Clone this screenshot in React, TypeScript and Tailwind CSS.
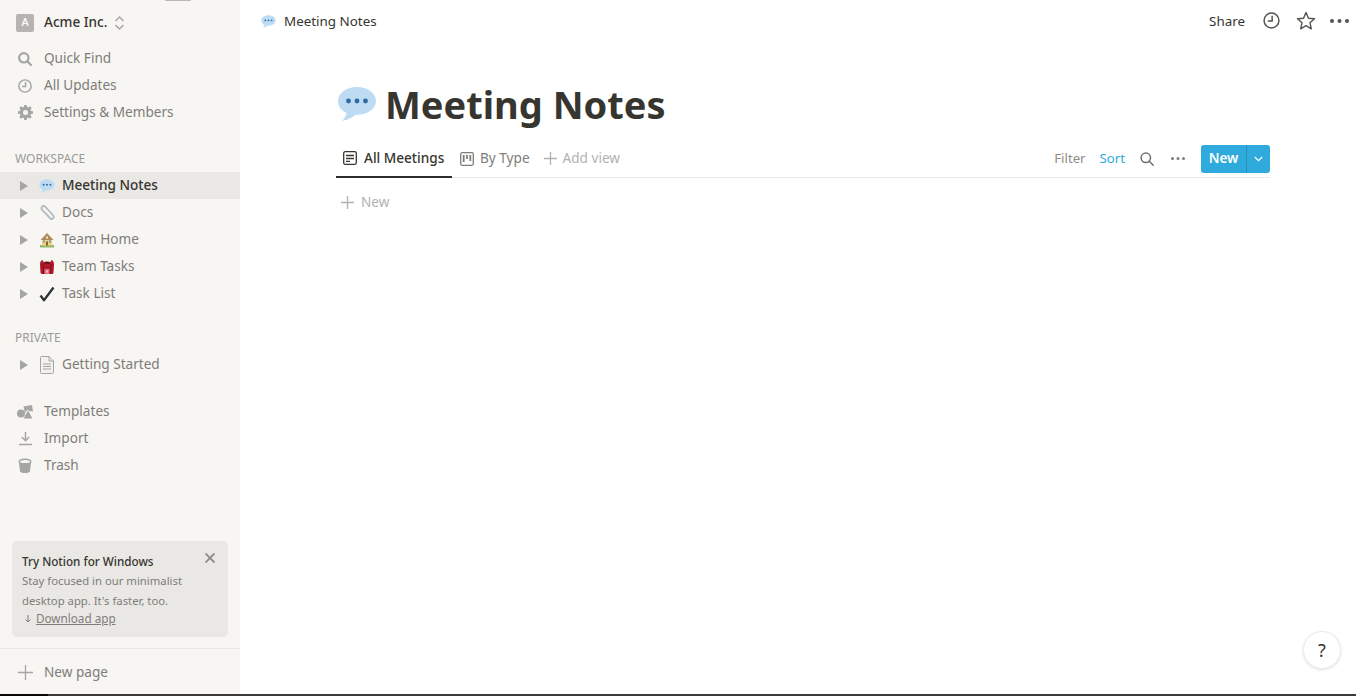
import React from "react";

const Bubble = ({ s }: { s: number }) => (
  <svg width={s} height={s} viewBox="0 0 40 40" className="shrink-0">
    <path d="M20 3C9.5 3 1 9.200 1 17c0 5.600 3.400 9.600 8.600 12-.6 3-2.400 5.800-4.600 8 5-.8 10.600-3.400 13.600-6.200H20c10.500 0 19-6 19-13.800S30.500 3 20 3z" fill="#bddcf4" />
    <circle cx="11.500" cy="17" r="2.400" fill="#2f6a9f" />
    <circle cx="20" cy="17" r="2.400" fill="#2f6a9f" />
    <circle cx="28.500" cy="17" r="2.400" fill="#2f6a9f" />
  </svg>
);

const Clip = () => (
  <svg width="16" height="16" viewBox="0 0 16 16" fill="none" stroke="#b4bac0" strokeWidth="1.800" strokeLinecap="round">
    <path d="M2.500 4l8.200 9c1 1 2.600 1.200 3.400.4s.7-2.300-.3-3.400L6.500 2C5.600 1 4 .8 3 1.600s-.7 2.300.2 3.200l7 7.400" />
  </svg>
);

const HomeEmoji = () => (
  <svg width="16" height="16" viewBox="0 0 16 16">
    <rect x="1" y="13" width="14" height="2.500" fill="#8fb96a" />
    <rect x="3" y="7" width="10" height="6.500" fill="#f3d27c" />
    <path d="M8 1L1.500 8h13z" fill="#b08a5a" />
    <rect x="7" y="9.500" width="2" height="4" fill="#8a5a34" />
    <rect x="4" y="8.500" width="2" height="2" fill="#5f9bd0" />
    <rect x="10" y="8.500" width="2" height="2" fill="#5f9bd0" />
    <rect x="7" y="4.500" width="2" height="2" fill="#f4ead0" />
  </svg>
);

const Bag = () => (
  <svg width="16" height="16" viewBox="0 0 16 16">
    <path d="M1 5.500C1 3 2 1.500 3.500 1L5 3.500h6L12.500 1C14 1.500 15 3 15 5.500l-.5 8c-.1 1-.8 1.500-1.800 1.500H3.300c-1 0-1.700-.5-1.800-1.500z" fill="#b0182a" />
    <path d="M5 3.500c.5-1.300 5.500-1.300 6 0L10.500 5h-5z" fill="#701019" />
    <path d="M4 5l.5 10M12 5l-.5 10" stroke="#7c101e" strokeWidth="1" />
    <rect x="5.500" y="10" width="5" height="5" fill="#e06a7c" />
    <rect x="7.400" y="11.500" width="1.200" height="2" fill="#fff" />
  </svg>
);

const Check = () => (
  <svg width="16" height="16" viewBox="0 0 16 16" fill="none">
    <path d="M1.500 9.500l3.500 4.700L14.500 1.500" stroke="#2f3437" strokeWidth="2.300" strokeLinejoin="round" />
  </svg>
);

const Doc = () => (
  <svg width="14" height="18" viewBox="0 0 14 18" fill="none" stroke="#a5a5a3" strokeWidth="1">
    <path d="M.500 1.500a1 1 0 011-1H9L13.500 5v11.500a1 1 0 01-1 1h-11a1 1 0 01-1-1z" fill="#f2f1ee" />
    <path d="M9 .5V5h4.500M3 8h8M3 10.500h8M3 13h8" />
  </svg>
);

const Search = ({ c = "#a5a5a3", w = 2.200 }: { c?: string; w?: number }) => (
  <svg width="14" height="14" viewBox="0 0 14 14" fill="none" stroke={c} strokeWidth={w}>
    <circle cx="5.800" cy="5.800" r="4.700" />
    <path d="M9.200 9.200L13.300 13.300" strokeLinecap="round" />
  </svg>
);

const Clock = ({ s, c, w }: { s: number; c: string; w: number }) => (
  <svg width={s} height={s} viewBox="0 0 16 16" fill="none" stroke={c} strokeWidth={w}>
    <circle cx="8" cy="8" r="7" />
    <path d="M8.600 3.500v5H4.500" />
  </svg>
);

const Gear = () => (
  <svg width="15" height="15" viewBox="0 0 16 16" fill="#a5a5a3">
    <path fillRule="evenodd" d="M6.700 0h2.600l.4 2.200 1.200.5L12.800 1.400l1.800 1.800-1.300 1.900.5 1.200 2.200.4v2.600l-2.200.4-.5 1.200 1.300 1.900-1.800 1.800-1.900-1.300-1.200.5-.4 2.200H6.700l-.4-2.200-1.200-.5-1.900 1.300-1.800-1.800 1.300-1.900-.5-1.200L0 9.300V6.700l2.200-.4.500-1.200L1.400 3.200l1.800-1.800 1.900 1.300 1.200-.5zM8 5.300a2.700 2.700 0 100 5.400 2.700 2.700 0 000-5.400z" />
  </svg>
);

const Shapes = () => (
  <svg width="16" height="14" viewBox="0 0 16 14" fill="#a5a5a3">
    <circle cx="4" cy="8.500" r="4" />
    <path d="M6.500 1.500L15 0l1 6.500-4-.5-1.500-1.500L8 8z" />
    <path d="M11 5.500L15.500 13.500H6.500z" />
  </svg>
);

const Download = () => (
  <svg width="15" height="15" viewBox="0 0 15 15" fill="none" stroke="#a5a5a3" strokeWidth="1.500">
    <path d="M7.500 1v8.500M3.800 6l3.700 3.700L11.200 6M1 13.500h13" />
  </svg>
);

const Trash = () => (
  <svg width="14" height="15" viewBox="0 0 14 15" fill="#a5a5a3">
    <path d="M.500 3.500C.500 1.500 3.500.500 7 .500s6.500 1 6.500 3c0 .6-.2 1-.5 1.300l-1 8.400c-.2 1-2.200 1.800-5 1.800s-4.800-.8-5-1.800L1 4.800c-.3-.3-.5-.7-.5-1.300z" />
    <ellipse cx="7" cy="3.400" rx="5" ry="1.500" fill="#f7f6f3" />
  </svg>
);

const Plus = ({ s, c }: { s: number; c: string }) => (
  <svg width={s} height={s} viewBox="0 0 14 14" fill="none" stroke={c} strokeWidth={14 * 1.300 / s}>
    <path d="M7 0v14M0 7h14" />
  </svg>
);

const Caret = () => (
  <svg width="8" height="10" viewBox="0 0 8 10" className="shrink-0">
    <path d="M0 0l8 5-8 5z" fill="#a5a5a3" />
  </svg>
);

const Dots = ({ c, r, gap, w }: { c: string; r: number; gap: number; w: number }) => (
  <svg width={w} height={r * 2} viewBox={`0 0 ${w} ${r * 2}`}>
    <circle cx={r} cy={r} r={r} fill={c} />
    <circle cx={r + gap} cy={r} r={r} fill={c} />
    <circle cx={r + gap * 2} cy={r} r={r} fill={c} />
  </svg>
);

const NavRow = ({ icon, label }: { icon: React.ReactNode; label: string }) => (
  <div className="flex h-[27px] items-center text-[13.6px] text-[#7e7d79]">
    <div className="flex w-[44px] shrink-0 justify-center pl-[6px]">{icon}</div>
    <span>{label}</span>
  </div>
);

const TreeRow = ({ icon, label, active }: { icon: React.ReactNode; label: string; active?: boolean }) => (
  <div className={`flex h-[27px] items-center pl-[20px] text-[13.6px] ${active ? "bg-[#e9e8e5] text-[#37352f] font-medium" : "text-[#7e7d79]"}`}>
    <Caret />
    <div className="flex w-[34px] shrink-0 justify-center pl-[4px]">{icon}</div>
    <span>{label}</span>
  </div>
);

const SectionLabel = ({ children, cls }: { children: React.ReactNode; cls: string }) => (
  <div className={`flex h-[20px] items-center pl-[15px] text-[12px] text-[#9b9a97] ${cls}`}>{children}</div>
);

export default function App() {
  return (
    <div className="flex h-[696px] w-[1356px] flex-col overflow-hidden bg-white font-['Noto_Sans','Open_Sans',sans-serif] text-[#37352f]">
      <div className="flex min-h-0 flex-1">
        <aside className="relative flex w-[240px] shrink-0 flex-col bg-[#f7f6f3]">
          <div className="absolute left-[165px] top-0 h-[1px] w-[26px] rounded-b bg-[#b8b8b6]" />
          <div className="mt-[9px] flex h-[27px] items-center pl-[16px] text-[13.6px] font-medium text-[#37352f]">
            <div className="flex h-[18px] w-[18px] items-center justify-center rounded-[2px] bg-[#b5b4b2] text-[11px] text-white">A</div>
            <span className="ml-[10px]">Acme Inc.</span>
            <svg width="11" height="14" viewBox="0 0 11 14" fill="none" stroke="#a5a5a3" strokeWidth="1.400" className="ml-[6px]">
              <path d="M1.500 5l4-4 4 4M1.500 9l4 4 4-4" />
            </svg>
          </div>
          <div className="mt-[9px]">
            <NavRow icon={<Search />} label="Quick Find" />
            <NavRow icon={<Clock s={14} c="#a5a5a3" w={1.700} />} label="All Updates" />
            <NavRow icon={<Gear />} label="Settings & Members" />
          </div>
          <SectionLabel cls="mt-[23px] mb-[3px]">WORKSPACE</SectionLabel>
          <TreeRow active icon={<Bubble s={16} />} label="Meeting Notes" />
          <TreeRow icon={<Clip />} label="Docs" />
          <TreeRow icon={<HomeEmoji />} label="Team Home" />
          <TreeRow icon={<Bag />} label="Team Tasks" />
          <TreeRow icon={<Check />} label="Task List" />
          <SectionLabel cls="mt-[21px] mb-[3px]">PRIVATE</SectionLabel>
          <TreeRow icon={<Doc />} label="Getting Started" />
          <div className="mt-[20px]">
            <NavRow icon={<Shapes />} label="Templates" />
            <NavRow icon={<Download />} label="Import" />
            <NavRow icon={<Trash />} label="Trash" />
          </div>
          <div className="relative mx-[12px] mb-[11px] mt-auto h-[96px] rounded-[5px] bg-[#e9e8e5] px-[10px] pt-[11px] text-[11.3px] leading-[19px] text-[#7e7d79]">
            <div className="text-[11.7px] font-medium leading-[18px] text-[#37352f]">Try Notion for Windows</div>
            <div className="mb-[1px] mt-[1px]">Stay focused in our minimalist</div>
            <div>desktop app. It's faster, too.</div>
            <div className="-mt-[1px] flex items-center">
              <svg width="6" height="8" viewBox="0 0 6 8" fill="none" stroke="#7e7d79" strokeWidth="1" className="ml-[3px] mr-[5px]">
                <path d="M3 0v7M.5 4.500L3 7l2.500-2.500" />
              </svg>
              <span className="text-[11.7px] underline">Download app</span>
            </div>
            <svg width="10" height="10" viewBox="0 0 10 10" stroke="#8d8c88" strokeWidth="1.900" className="absolute right-[13px] top-[12px]">
              <path d="M.5.5l9 9M9.500.5l-9 9" />
            </svg>
          </div>
          <div className="flex h-[46px] items-center border-t border-[#e9e8e5] pt-[1px] text-[13.6px] text-[#7e7d79]">
            <div className="flex w-[44px] justify-center pl-[6px]"><Plus s={15} c="#a5a5a3" /></div>
            <span>New page</span>
          </div>
        </aside>

        <main className="relative min-w-0 flex-1">
          <header className="flex h-[42px] items-center pl-[21px] pr-[7px] text-[13.4px]">
            <Bubble s={15} />
            <span className="ml-[8px]">Meeting Notes</span>
            <div className="ml-auto flex items-center">
              <span>Share</span>
              <div className="ml-[18px]"><Clock s={17} c="#55534e" w={1.400} /></div>
              <svg width="20" height="19" viewBox="0 0 20 19" fill="none" stroke="#55534e" strokeWidth="1.400" className="ml-[16px]">
                <path d="M10 1.500l2.500 5.700 6 .6-4.500 4 1.300 6L10 14.700l-5.300 3.100 1.300-6-4.500-4 6-.6z" strokeLinejoin="round" />
              </svg>
              <div className="ml-[14px]"><Dots c="#55534e" r={2} gap={7.500} w={19} /></div>
            </div>
          </header>

          <div className="mx-[96px] w-[934px]">
            <div className="mt-[35px] flex h-[54px] items-center">
              <div className="ml-[1px]"><Bubble s={40} /></div>
              <h1 className="ml-[8px] text-[38px] font-bold leading-none text-[#37352f]">Meeting Notes</h1>
            </div>
            <div className="mt-[9px] flex h-[38px] items-stretch border-b border-[#e9e9e7] text-[13.6px]">
              <div className="-mb-px flex w-[116px] items-center border-b-2 border-[#2f2e2b] pl-[7px] font-medium">
                <svg width="14" height="14" viewBox="0 0 14 14" fill="none" stroke="#37352f" strokeWidth="1.300">
                  <rect x=".7" y=".7" width="12.600" height="12.600" rx="1.500" />
                  <path d="M3 4.500h8M3 7.500h8M3 10.300h4" />
                </svg>
                <span className="ml-[7px]">All Meetings</span>
              </div>
              <div className="ml-[8px] flex items-center text-[#7e7d79]">
                <svg width="14" height="14" viewBox="0 0 14 14" fill="none" stroke="#7e7d79" strokeWidth="1.300">
                  <rect x=".7" y=".7" width="12.600" height="12.600" rx="1.500" />
                  <path d="M3.700 3v7M7 3v4M10.300 3v6" strokeWidth="1.800" />
                </svg>
                <span className="ml-[6px]">By Type</span>
              </div>
              <div className="ml-[14px] flex items-center text-[#b3b2af]">
                <Plus s={13} c="#b3b2af" />
                <span className="ml-[6px]">Add view</span>
              </div>
              <div className="ml-auto flex items-center text-[13.2px]">
                <span className="text-[#8d8c88]">Filter</span>
                <span className="ml-[14px] text-[#2eaadc]">Sort</span>
                <div className="ml-[15px]"><Search c="#6f6e69" w={1.500} /></div>
                <div className="ml-[17px]"><Dots c="#7e7d79" r={1.500} gap={5.500} w={14} /></div>
                <div className="ml-[16px] flex h-[28px] w-[69px] overflow-hidden rounded-[3px] bg-[#2eaadc] text-[13.6px] text-white">
                  <div className="flex w-[46px] items-center justify-center border-r border-[#2a8fb8] font-semibold">New</div>
                  <div className="flex flex-1 items-center justify-center">
                    <svg width="9" height="6" viewBox="0 0 9 6" fill="none" stroke="#fff" strokeWidth="1.200">
                      <path d="M.8 1l3.700 3.700L8.200 1" />
                    </svg>
                  </div>
                </div>
              </div>
            </div>
            <div className="flex h-[48px] items-center pl-[5px] text-[13.6px] text-[#b3b2af]">
              <Plus s={13} c="#b3b2af" />
              <span className="ml-[7px]">New</span>
            </div>
          </div>

          <div className="absolute bottom-[25px] right-[15px] flex h-[38px] w-[38px] items-center justify-center rounded-full border border-[#ecebea] bg-white text-[18px] text-[#37352f] shadow-[0_1px_3px_rgba(15,15,15,0.12)]">?</div>
        </main>
      </div>
      <div className="flex h-[2px] shrink-0 bg-[#3a3a3a]">
        <div className="w-[48px] bg-[#0a0a0a]" />
      </div>
    </div>
  );
}
